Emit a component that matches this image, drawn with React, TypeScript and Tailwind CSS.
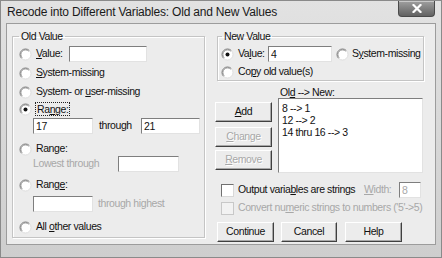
import React from "react";

function RadioDot({ checked = false }: { checked?: boolean }) {
  return (
    <svg width="13" height="13" viewBox="0 0 13 13" className="shrink-0">
      <circle cx="6.5" cy="6.5" r="5.5" fill="#fff" />
      <path d="M10.4 2.6 A5.5 5.5 0 0 0 2.6 10.4" stroke="#7c7c7c" fill="none" />
      <path d="M9.7 3.3 A4.5 4.5 0 0 0 3.3 9.7" stroke="#3c3c3c" strokeOpacity="0.45" fill="none" />
      <path d="M2.6 10.4 A5.5 5.5 0 0 0 10.4 2.6" stroke="#dedede" fill="none" />
      {checked && <circle cx="6.5" cy="6.5" r="2" fill="#111" />}
    </svg>
  );
}

function Radio({ checked = false, className = "", children }: { checked?: boolean; className?: string; children: React.ReactNode }) {
  return (
    <div className={`flex h-[14px] items-center ${className}`}>
      <RadioDot checked={checked} />
      <span className="ml-[4px] whitespace-nowrap">{children}</span>
    </div>
  );
}

function Box({ className = "", children }: { className?: string; children?: React.ReactNode }) {
  return (
    <div className={`h-[16px] border border-t-[#7e7e7e] border-l-[#7e7e7e] border-r-[#e2e2e2] border-b-[#e2e2e2] bg-white pl-[2px] leading-[14px] ${className}`}>
      {children}
    </div>
  );
}

function Check({ disabled = false }: { disabled?: boolean }) {
  return (
    <div
      className={`h-[13px] w-[13px] shrink-0 border ${
        disabled ? "border-[#c8c8c8] bg-[#f2f2f2]" : "border-t-[#707070] border-l-[#707070] border-r-[#d8d8d8] border-b-[#d8d8d8] bg-white"
      }`}
    />
  );
}

function Btn({ className = "", disabled = false, children }: { className?: string; disabled?: boolean; children: React.ReactNode }) {
  return (
    <button
      className={`flex h-[20px] items-center justify-center border border-t-white border-l-white border-r-[#404040] border-b-[#404040] bg-[#ececec] shadow-[inset_-1px_-1px_0_#a8a8a8] ${
        disabled ? "text-[#a8a8a8] [text-shadow:1px_1px_0_#fff]" : "text-[#111]"
      } ${className}`}
    >
      {children}
    </button>
  );
}

const group = "border border-[#c4c4c4] shadow-[inset_1px_1px_0_#fff,1px_1px_0_#fff]";

export default function App() {
  return (
    <div className="flex h-[258px] w-[442px] flex-col border border-[#8a8a8a] bg-gradient-to-b from-[#e2e2e2] to-[#cecece] font-['Liberation_Sans',Arial,sans-serif] text-[10.5px] tracking-[-0.4px] text-[#111]">
      <div className="flex h-[22px] shrink-0">
        <div className="self-center pl-[6px] text-[12px] tracking-[-0.2px] text-[#1a1a1a]">
          Recode into Different Variables: Old and New Values
        </div>
        {/* close button */}
        <div className="ml-auto mr-[6px] flex h-[16px] w-[37px] items-center justify-center rounded-b-[4px] border border-t-0 border-[#4a4a4a] bg-gradient-to-b from-[#a0a0a0] to-[#626262] shadow-[inset_0_1px_0_#c8c8c8]">
          <svg width="10" height="9" viewBox="0 0 10 9">
            <path d="M1.5 1 L8.5 8 M8.5 1 L1.5 8" stroke="#fff" strokeWidth="2.2" strokeLinecap="square" />
          </svg>
        </div>
      </div>

      <div className="mx-[5px] flex h-[222px] border border-[#9c9c9c] bg-[#ececec] pt-[6px]">
        {/* Old Value */}
        <fieldset className={`ml-[5px] w-[193px] self-start pl-[6px] pb-[3px] ${group}`}>
          <legend className="px-[2px] leading-[12px]">Old Value</legend>
          <div className="mt-[4px] flex h-[16px] items-center">
            <RadioDot />
            <span className="ml-[4px] w-[33px]"><u>V</u>alue:</span>
            <Box className="w-[78px]" />
          </div>
          <Radio className="mt-[4px]"><u>S</u>ystem-missing</Radio>
          <Radio className="mt-[5px]">System- or <u>u</u>ser-missing</Radio>
          <div className="mt-[3px] flex h-[14px] items-center">
            <RadioDot checked />
            <span className="ml-[3px] border border-dotted border-[#222] px-[1px] leading-[12px]">Ra<u>n</u>ge:</span>
          </div>
          <div className="ml-[14px] mt-[2px] flex h-[16px] items-center">
            <Box className="w-[60px]">17</Box>
            <span className="ml-[6px] w-[42px]">through</span>
            <Box className="w-[59px]">21</Box>
          </div>
          <Radio className="mt-[8px]">Ran<u>g</u>e:</Radio>
          <div className="ml-[14px] flex h-[16px] items-center">
            <span className="w-[85px] text-[#a8a8a8]">Lowest through</span>
            <Box className="w-[61px]" />
          </div>
          <Radio className="mt-[6px]">Rang<u>e</u>:</Radio>
          <div className="ml-[14px] mt-[4px] flex h-[16px] items-center">
            <Box className="w-[60px]" />
            <span className="ml-[5px] text-[#a8a8a8]">through highest</span>
          </div>
          <Radio className="mt-[8px]">All <u>o</u>ther values</Radio>
        </fieldset>

        {/* right column */}
        <div className="ml-[12px] flex w-[207px] flex-col">
          <fieldset className={`pl-[3px] pb-[1px] ${group}`}>
            <legend className="ml-[1px] px-[2px] leading-[12px]">New Value</legend>
            <div className="mt-[4px] flex h-[16px] items-center">
              <RadioDot checked />
              <span className="ml-[4px] w-[30px]">Va<u>l</u>ue:</span>
              <Box className="w-[64px]">4</Box>
              <div className="ml-[4px]">
                <RadioDot />
              </div>
              <span className="ml-[3px] whitespace-nowrap">S<u>y</u>stem-missing</span>
            </div>
            <Radio className="mt-[3px]">Co<u>p</u>y old value(s)</Radio>
          </fieldset>

          <div className="-ml-[2px] mt-[5px] flex">
            <div className="flex w-[57px] flex-col pt-[16px]">
              <Btn className="w-[57px]"><u>A</u>dd</Btn>
              <Btn disabled className="mt-[5px] w-[57px]"><u>C</u>hange</Btn>
              <Btn disabled className="mt-[3px] w-[57px]"><u>R</u>emove</Btn>
            </div>
            <div className="ml-[6px] flex w-[145px] flex-col">
              <div className="pl-[2px] leading-[12px]">Ol<u>d</u> --&gt; New:</div>
              <div className="h-[75px] border border-t-[#7e7e7e] border-l-[#7e7e7e] border-r-[#e2e2e2] border-b-[#e2e2e2] bg-white pl-[3px] pt-[3px] leading-[12px]">
                <div>8 --&gt; 1</div>
                <div>12 --&gt; 2</div>
                <div>14 thru 16 --&gt; 3</div>
              </div>
            </div>
          </div>

          <div className="mt-[9px] flex h-[16px] items-center">
            <div className="ml-[4px]">
              <Check />
            </div>
            <span className="ml-[4px] whitespace-nowrap">Output varia<u>b</u>les are strings</span>
            <div className="flex-1" />
            <span className="w-[35px] text-[#a8a8a8]"><u>W</u>idth:</span>
            <Box className="mr-[3px] w-[22px] text-[#a8a8a8]">8</Box>
          </div>
          <div className="mt-[3px] flex h-[14px] items-center">
            <div className="ml-[4px]">
              <Check disabled />
            </div>
            <span className="ml-[4px] whitespace-nowrap text-[#a8a8a8]">Convert nu<u>m</u>eric strings to numbers ('5'-&gt;5)</span>
          </div>

          <div className="mt-[7px] flex">
            <Btn className="w-[57px]">Continue</Btn>
            <Btn className="ml-[7px] w-[56px]">Cancel</Btn>
            <Btn className="ml-[8px] w-[57px]">Help</Btn>
          </div>
        </div>
      </div>
    </div>
  );
}
